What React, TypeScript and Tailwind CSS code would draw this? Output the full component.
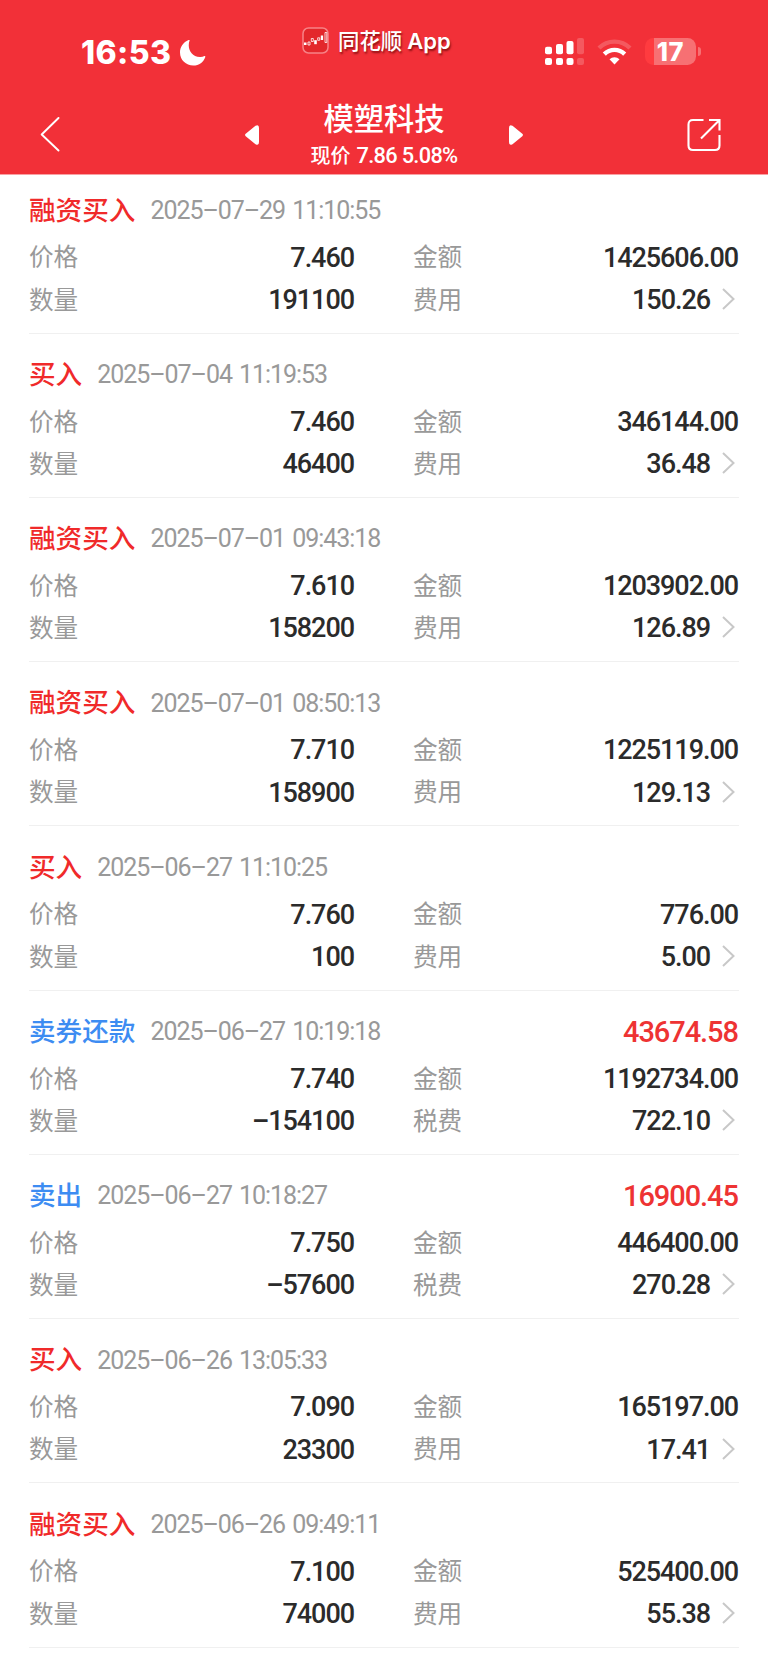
import clsx from "clsx";

type Trade = {
  kind: string;
  time: string;
  price: string;
  count: string;
  amount: string;
  fee: string;
  sell?: boolean;
  profit?: string;
};

const trades: Trade[] = [
  { kind: "融资买入", time: "2025–07–29 11:10:55", price: "7.460", count: "191100", amount: "1425606.00", fee: "150.26" },
  { kind: "买入", time: "2025–07–04 11:19:53", price: "7.460", count: "46400", amount: "346144.00", fee: "36.48" },
  { kind: "融资买入", time: "2025–07–01 09:43:18", price: "7.610", count: "158200", amount: "1203902.00", fee: "126.89" },
  { kind: "融资买入", time: "2025–07–01 08:50:13", price: "7.710", count: "158900", amount: "1225119.00", fee: "129.13" },
  { kind: "买入", time: "2025–06–27 11:10:25", price: "7.760", count: "100", amount: "776.00", fee: "5.00" },
  { kind: "卖券还款", time: "2025–06–27 10:19:18", price: "7.740", count: "–154100", amount: "1192734.00", fee: "722.10", sell: true, profit: "43674.58" },
  { kind: "卖出", time: "2025–06–27 10:18:27", price: "7.750", count: "–57600", amount: "446400.00", fee: "270.28", sell: true, profit: "16900.45" },
  { kind: "买入", time: "2025–06–26 13:05:33", price: "7.090", count: "23300", amount: "165197.00", fee: "17.41" },
  { kind: "融资买入", time: "2025–06–26 09:49:11", price: "7.100", count: "74000", amount: "525400.00", fee: "55.38" },
];

const StatusBar = () => {
  return (
    <div className="flex h-[88px] items-start pl-[81px] pr-[67px]">
      {/* Clock */}
      <div className="flex w-[221px] items-center pt-[33px]">
        <span className="w-[91px] whitespace-nowrap font-['Inter'] text-[32px] font-extrabold leading-[40px] tracking-[0.4px]">16:53</span>
        <svg className="ml-[7px] h-[26px] w-[27px]" viewBox="0 0 27 26" fill="currentColor">
          <path d="M10.6.6C7.8 7.9 12 17.4 21.5 17c1.5 0 2.8-.3 3.9-.9.6-.3 1.1.2.9.8C24.7 22 20 25.5 14.3 25.5 7 25.5 1 20.3 1 12.6 1 7 4.3 2.3 9.6.1c.7-.2 1.2 0 1 .5Z" />
        </svg>
      </div>

      {/* App the screen was captured from */}
      <div className="flex items-start pt-[27px]">
        <svg className="h-[27px] w-[27px]" viewBox="0 0 27 27">
          <rect x="1" y="1" width="25" height="25" rx="5.5" fill="#e3272b" stroke="#f78286" strokeWidth="1.5" />
          <g fill="#fff">
            <rect x="2" y="15.5" width="2.5" height="2.5" />
            <rect x="12.2" y="13.2" width="2.6" height="4" />
            <rect x="18.8" y="8.5" width="2.3" height="4.5" />
          </g>
          <g fill="none" stroke="#fff" strokeWidth=".8">
            <path d="M6 15h2v3h-2zM9.3 11.5h2v3h-2zM15.7 10.8h2v2.5h-2zM23 5.5h1.8v10H23z" />
          </g>
        </svg>
        <span className="-mt-[3px] ml-[9px] whitespace-nowrap font-['Noto_Sans_CJK_SC',sans-serif] text-[21.4px] font-medium leading-8 [text-shadow:1px_2px_2px_rgb(90_0_0/0.65)]">
          同花顺<span className="ml-[5px] font-['Inter'] text-[22px] font-semibold">App</span>
        </span>
      </div>

      <div className="ml-auto flex items-center pt-[38px]">
        <svg className="h-[27px] w-[40px]" viewBox="0 0 40 27" fill="currentColor">
          <rect x="1" y="8.7" width="7" height="7.5" rx="2" />
          <rect x="12" y="6" width="7" height="10.2" rx="2" />
          <rect x="22.5" y="3" width="7" height="13.2" rx="2" />
          <rect x="33" y="0" width="7" height="16.2" rx="2" opacity=".2" />
          <rect x="1" y="20" width="7" height="7" rx="2" />
          <rect x="12" y="20" width="7" height="7" rx="2" />
          <rect x="22.5" y="20" width="7" height="7" rx="2" />
          <rect x="33" y="20" width="7" height="7" rx="2" opacity=".2" />
        </svg>
        <svg className="ml-[13px] h-[26px] w-[35px]" viewBox="0 0 35 26" fill="none" stroke="currentColor" strokeWidth="4.4">
          <path d="M2 9a22 22 0 0 1 31 0" opacity=".2" />
          <path d="M7.3 15.1a14.5 14.5 0 0 1 20.4 0" />
          <path d="M17.5 25.5l-5-5.2a7.2 7.2 0 0 1 10 0z" fill="currentColor" stroke="none" />
        </svg>
        <div className="ml-[13px] flex items-center">
          <div className="flex h-[27px] w-[51px] items-center justify-center rounded-[8.5px] bg-linear-to-r from-[#ff3b3f] from-[17%] to-[#f77073] to-[17%] pt-px font-['Inter'] text-[25.5px] font-extrabold tracking-[0.6px]">17</div>
          <div className="ml-[2px] h-[9px] w-[3px] rounded-r-full bg-[#f77073]" />
        </div>
      </div>
    </div>
  );
};

const NavBar = () => {
  return (
    <div className="flex h-[86px] items-start pl-[40px] pr-[47px]">
      <svg className="mt-[29px] h-[35px] w-[20px]" viewBox="0 0 20 35" fill="none" stroke="currentColor" strokeWidth="1.9" strokeLinecap="round" strokeLinejoin="round">
        <path d="M18.5 1L1.7 17.5l16.8 16" />
      </svg>

      <div className="ml-[185px] flex items-start">
        <svg className="mt-[37px] h-[20px] w-[14px]" viewBox="0 0 14 20" fill="currentColor">
          <path d="M.7 8.8L10.5.8Q14-1.2 14 3v14q0 4.2-3.5 2.2L.7 11.2q-1.3-1.2 0-2.4Z" />
        </svg>
        <div className="w-[250px] text-center">
          <h1 className="pt-[10px] font-['Noto_Sans_CJK_SC',sans-serif] text-[30.3px] font-medium leading-[38px]">模塑科技</h1>
          <p className="font-['Noto_Sans_CJK_SC',sans-serif] text-[20px] font-medium leading-[37px]">
            现价<span className="ml-[6px] font-['Roboto'] text-[21.8px] tracking-[-0.7px]">7.86 5.08%</span>
          </p>
        </div>
        <svg className="mt-[37px] h-[20px] w-[14px] rotate-180" viewBox="0 0 14 20" fill="currentColor">
          <path d="M.7 8.8L10.5.8Q14-1.2 14 3v14q0 4.2-3.5 2.2L.7 11.2q-1.3-1.2 0-2.4Z" />
        </svg>
      </div>

      <svg className="ml-auto mt-[30px] h-[34px] w-[34px]" viewBox="0 0 34 34" fill="none" stroke="currentColor" strokeWidth="2.1">
        <path d="M16.5 2H6Q1.5 2 1.5 6.5v21Q1.5 32 6 32h22q4.5 0 4.5-4.5V17" />
        <path d="M22 2h10.5v10.5M32 2.5L14 20.5" />
      </svg>
    </div>
  );
};

const Cell = ({ label, value, more }: { label: string; value: string; more?: boolean }) => {
  return (
    <div className="flex h-[42.3px] items-center">
      <span className="pt-[4px] text-[24.6px] text-[#999]">{label}</span>
      <span className="ml-auto mr-px pt-[3px] text-[27px] font-medium tracking-[-1.05px] text-[#2b2b2b]">{value}</span>
      {more && (
        <svg className="ml-[11px] mr-[4px] h-[22px] w-[13px]" viewBox="0 0 13 22" fill="none" stroke="#c8c8c8" strokeWidth="2">
          <path d="M1 1l10.5 10L1 21" />
        </svg>
      )}
    </div>
  );
};

const TradeItem = ({ trade }: { trade: Trade }) => {
  return (
    <li className="flex h-[164.26px] flex-col justify-end border-b border-[#f0f0f0] pb-[12.5px] first:h-[158.5px]">
      <div className="flex h-[52px] items-center pt-[2px]">
        <span className={clsx("pt-px text-[26.6px] font-medium", trade.sell ? "text-[#3d8cf2]" : "text-[#f02a2a]")}>{trade.kind}</span>
        <span className="ml-[15px] text-[25px] tracking-[-1.05px] text-[#999] [word-spacing:2px]">{trade.time}</span>
        {trade.profit && <span className="ml-auto mr-px pt-[2px] text-[29px] font-medium tracking-[-1.05px] text-[#ee3333]">{trade.profit}</span>}
      </div>
      <div className="grid grid-cols-2 gap-x-[58px]">
        <Cell label="价格" value={trade.price} />
        <Cell label="金额" value={trade.amount} />
        <Cell label="数量" value={trade.count} />
        <Cell label={trade.sell ? "税费" : "费用"} value={trade.fee} more />
      </div>
    </li>
  );
};

export default function App() {
  return (
    <div className="h-[1665px] w-[768px] overflow-hidden bg-white">
      <header className="h-[175px] border-b border-[#f9a0a3] bg-[#f23038] text-white">
        <StatusBar />
        <NavBar />
      </header>
      <ul className="px-[29px] font-['Roboto','Noto_Sans_CJK_SC',sans-serif] leading-none">
        {trades.map((trade) => (
          <TradeItem key={trade.time} trade={trade} />
        ))}
      </ul>
    </div>
  );
}
